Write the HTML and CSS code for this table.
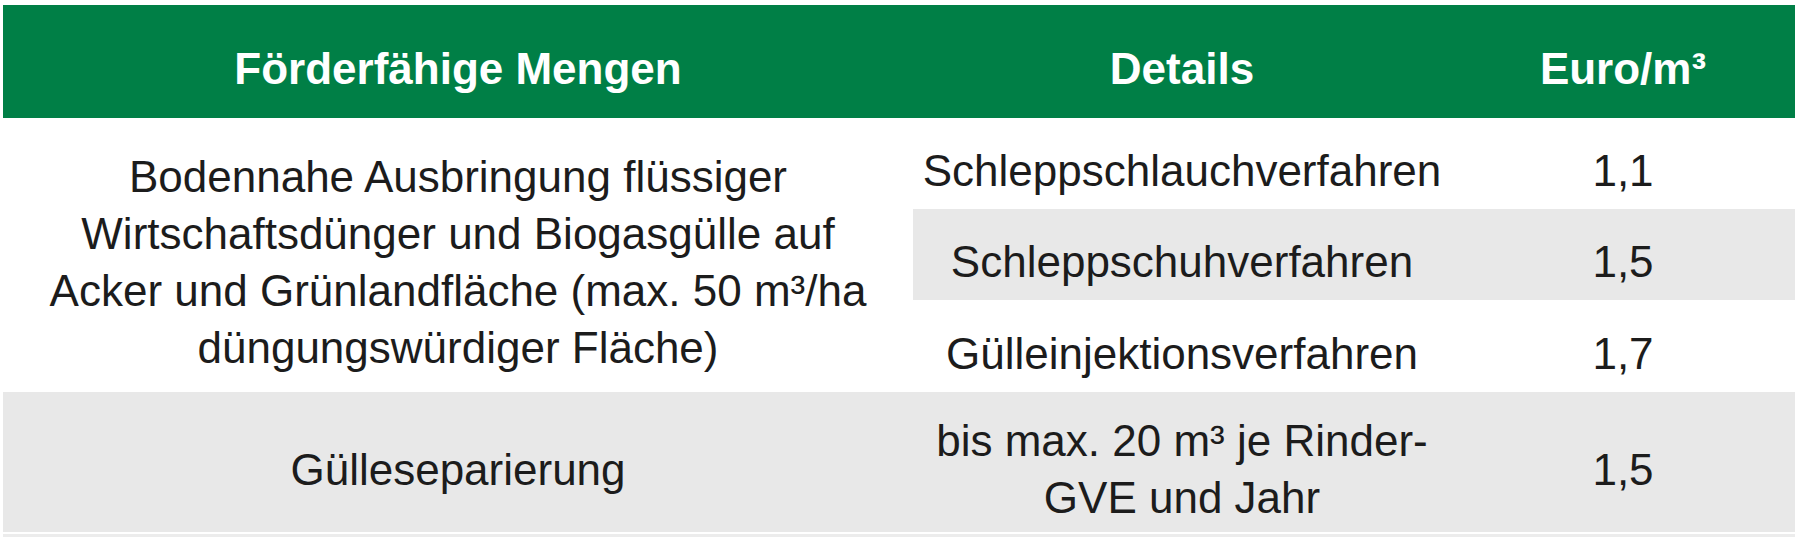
FILE: index.html
```html
<!DOCTYPE html>
<html lang="de">
<head>
<meta charset="utf-8">
<title>Förderfähige Mengen</title>
<link rel="stylesheet" href="styles.css">
</head>
<body>
<div class="wrap">
<table class="tbl">
  <colgroup>
    <col class="c1">
    <col class="c2">
    <col class="c3">
  </colgroup>
  <thead>
    <tr class="head">
      <th>Förderfähige Mengen</th>
      <th>Details</th>
      <th>Euro/m³</th>
    </tr>
  </thead>
  <tbody>
    <tr class="r1">
      <td rowspan="3" class="main">Bodennahe Ausbringung flüssiger<br>Wirtschaftsdünger und Biogasgülle auf<br>Acker und Grünlandfläche (max. 50 m³/ha<br>düngungswürdiger Fläche)</td>
      <td>Schleppschlauchverfahren</td>
      <td>1,1</td>
    </tr>
    <tr class="r2 alt">
      <td>Schleppschuhverfahren</td>
      <td>1,5</td>
    </tr>
    <tr class="r3">
      <td>Gülleinjektionsverfahren</td>
      <td>1,7</td>
    </tr>
    <tr class="r4 alt">
      <td>Gülleseparierung</td>
      <td>bis max. 20 m³ je Rinder-<br>GVE und Jahr</td>
      <td>1,5</td>
    </tr>
  </tbody>
</table>
<div class="foot"></div>
</div>
</body>
</html>
```
FILE: styles.css
```css
html, body {
  margin: 0;
  padding: 0;
  background: #ffffff;
}
body {
  font-family: "Liberation Sans", Arial, sans-serif;
}
.wrap {
  padding: 5px 5px 0 3px;
}
.tbl {
  width: 1792px;
  border-collapse: collapse;
  table-layout: fixed;
  font-size: 44px;
  line-height: 57px;
  color: #1c1c1c;
}
.c1 { width: 910px; }
.c2 { width: 538px; }
.c3 { width: 344px; }
.tbl th,
.tbl td {
  text-align: center;
  vertical-align: middle;
  padding: 14px 0 0 0;
  box-sizing: border-box;
}
.head {
  background: #007f46;
  color: #ffffff;
  height: 113px;
}
.head th {
  font-weight: bold;
}
.r1 { height: 91px; }
.r2 { height: 91px; }
.r3 { height: 92px; }
.r4 { height: 140px; }
.alt td {
  background: #e8e8e8;
}
.main {
  background: #ffffff;
}
.foot {
  margin-top: 2px;
  height: 6px;
  width: 1792px;
  background: #ececec;
}
```
